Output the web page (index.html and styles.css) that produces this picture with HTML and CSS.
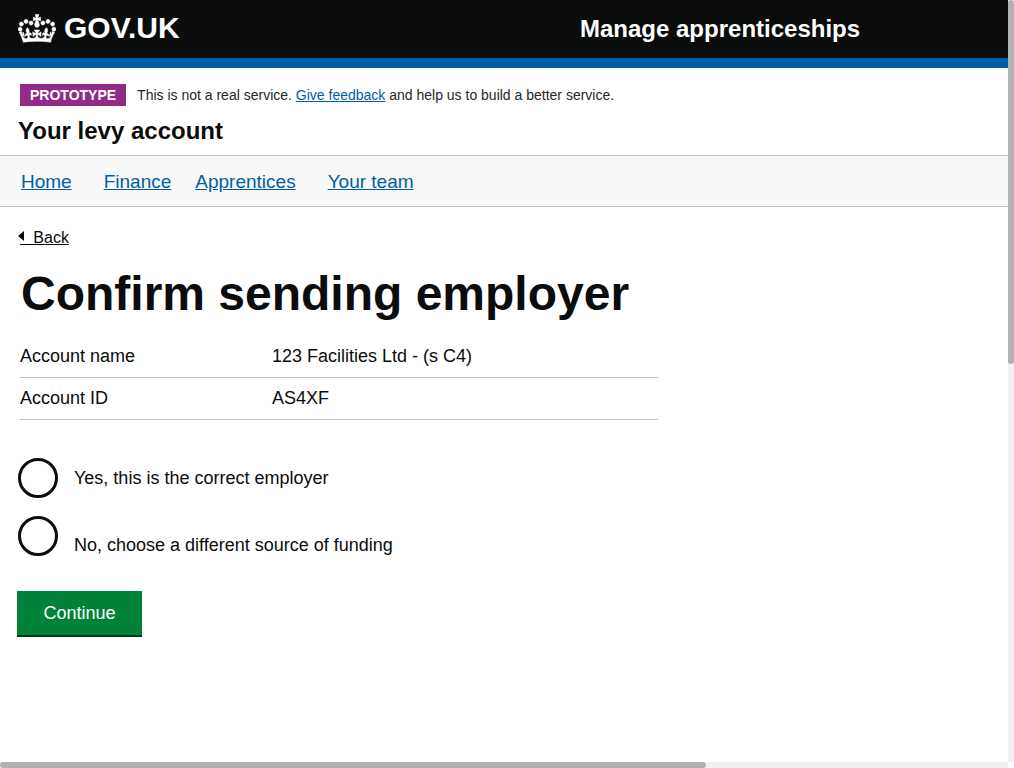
FILE: index.html
```html
<!DOCTYPE html>
<html lang="en">
<head>
<meta charset="utf-8">
<meta name="viewport" content="width=device-width, initial-scale=1">
<title>Confirm sending employer</title>
<link rel="stylesheet" href="styles.css">
</head>
<body>
<div class="frame">
  <div class="page">
    <header class="header">
      <a class="logo" href="#">
        <svg class="crown" viewBox="0 0 132 97" aria-hidden="true"><path fill="currentColor" stroke="currentColor" stroke-width="2" d="M25 30.2c3.5 1.5 7.7-.2 9.1-3.7 1.5-3.6-.2-7.8-3.9-9.2-3.6-1.4-7.6.3-9.1 3.9-1.4 3.5.3 7.5 3.9 9zM9 39.5c3.6 1.5 7.8-.2 9.2-3.7 1.5-3.6-.2-7.8-3.9-9.1-3.6-1.5-7.6.2-9.1 3.8-1.4 3.5.3 7.5 3.8 9zM4.4 57.2c3.5 1.5 7.7-.2 9.1-3.8 1.5-3.6-.2-7.7-3.9-9.1-3.5-1.5-7.6.3-9.1 3.8-1.4 3.5.3 7.6 3.9 9.1zm38.3-21.4c3.5 1.5 7.7-.2 9.1-3.8 1.5-3.6-.2-7.7-3.9-9.1-3.6-1.5-7.6.3-9.1 3.8-1.3 3.6.4 7.7 3.9 9.1zm64.4-5.6c-3.6 1.5-7.8-.2-9.1-3.7-1.5-3.6.2-7.8 3.8-9.2 3.6-1.4 7.7.3 9.2 3.9 1.3 3.5-.4 7.5-3.9 9zm15.9 9.3c-3.6 1.5-7.7-.2-9.1-3.7-1.5-3.6.2-7.8 3.7-9.1 3.6-1.5 7.7.2 9.2 3.8 1.5 3.5-.3 7.5-3.8 9zm4.7 17.7c-3.6 1.5-7.8-.2-9.2-3.8-1.5-3.6.2-7.7 3.9-9.1 3.6-1.5 7.7.3 9.2 3.8 1.3 3.5-.4 7.6-3.9 9.1zM89.3 35.8c-3.6 1.5-7.8-.2-9.2-3.8-1.4-3.6.2-7.7 3.9-9.1 3.6-1.5 7.7.3 9.2 3.8 1.4 3.6-.3 7.7-3.9 9.1zM69.7 17.7l8.9 4.7V9.3l-8.9 2.8c-.2-.3-.5-.6-.9-.9L72.4 0H59.6l3.5 11.2c-.3.3-.6.5-.9.9l-8.8-2.8v13.1l8.8-4.7c.3.3.6.7.9.9l-5 15.4v.1c-.2.8-.4 1.6-.4 2.4 0 4.1 3.1 7.5 7 8.1h.2c.3 0 .7.1 1 .1.4 0 .7 0 1-.1h.2c4-.6 7.1-4.1 7.1-8.1 0-.8-.1-1.7-.4-2.4V34l-5.1-15.4c.4-.2.7-.6 1-.9zM66 92.8c16.9 0 32.8 1.1 47.1 3.2 4-16.9 8.9-26.7 14-33.5l-9.6-3.4c1 4.9 1.1 7.2 0 10.2-1.5-1.4-3-4.3-4.2-8.7L108.6 76c2.8-2 5-3.2 7.5-3.3-4.4 9.4-10 11.9-13.6 11.2-4.3-.8-6.3-4.6-5.6-7.9 1-4.7 5.7-5.9 8-.5 4.3-8.7-3-11.4-7.6-8.8 7.1-7.2 7.9-13.5 2.1-21.1-8 6.1-8.1 12.3-4.5 20.8-4.7-5.4-12.1-2.5-9.5 6.2 3.4-5.2 7.9-2 7.2 3.1-.6 4.3-6.4 7.8-13.5 7.2-10.3-.9-10.9-8-11.2-13.8 2.5-.5 7.1 1.8 11 7.3L80.2 60c-4.1 4.4-8 5.3-12.3 5.4 1.4-4.4 8-11.6 8-11.6H55.5s6.4 7.2 7.9 11.6c-4.2-.1-8-1-12.3-5.4l1.4 16.4c3.9-5.5 8.5-7.7 10.9-7.3-.3 5.8-.9 12.8-11.1 13.8-7.2.6-12.9-2.9-13.5-7.2-.7-5 3.8-8.3 7.1-3.1 2.7-8.7-4.6-11.6-9.4-6.2 3.7-8.5 3.6-14.7-4.6-20.8-5.8 7.6-5 13.9 2.2 21.1-4.7-2.6-11.9.1-7.7 8.8 2.3-5.5 7.1-4.2 8.1.5.7 3.3-1.3 7.1-5.7 7.9-3.5.7-9-1.8-13.5-11.2 2.5.1 4.7 1.3 7.5 3.3l-4.7-15.4c-1.2 4.4-2.7 7.2-4.3 8.7-1.1-3-.9-5.3 0-10.2l-9.5 3.4c5 6.9 9.9 16.7 14 33.5 14.8-2.1 30.8-3.2 47.7-3.2z"/></svg>
        <span>GOV.UK</span>
      </a>
      <span class="service">Manage apprenticeships</span>
    </header>

    <div class="intro">
      <div class="phase">
        <strong class="tag">PROTOTYPE</strong>
        <p class="phase-text">This is not a real service. <a class="link" href="#">Give feedback</a> and help us to build a better service.</p>
      </div>
      <p class="account">Your levy account</p>
    </div>

    <nav class="nav" aria-label="Account">
      <a class="link" href="#">Home</a>
      <a class="link" href="#">Finance</a>
      <a class="link nav-near" href="#">Apprentices</a>
      <a class="link" href="#">Your team</a>
    </nav>

    <main class="main">
      <a class="back" href="#"><svg class="arrow" viewBox="0 0 6 10" aria-hidden="true"><path fill="currentColor" d="M6 0v10L0 5z"/></svg><span class="back-text">&nbsp;&nbsp;&nbsp;Back</span></a>
      <h1 class="title">Confirm sending employer</h1>
      <table class="details">
        <tbody>
          <tr><th scope="row">Account name</th><td>123 Facilities Ltd - (s C4)</td></tr>
          <tr><th scope="row">Account ID</th><td>AS4XF</td></tr>
        </tbody>
      </table>
      <form class="form">
        <div class="choice">
          <input class="radio" type="radio" name="confirm" id="confirm-yes">
          <label for="confirm-yes">Yes, this is the correct employer</label>
        </div>
        <div class="choice choice-low">
          <input class="radio" type="radio" name="confirm" id="confirm-no">
          <label for="confirm-no">No, choose a different source of funding</label>
        </div>
        <button class="button" type="button">Continue</button>
      </form>
    </main>
  </div>
  <div class="track track-v"><div class="thumb"></div></div>
  <div class="track track-h"><div class="thumb"></div></div>
</div>
</body>
</html>
```

FILE: styles.css
```css
* {
  box-sizing: border-box;
}

body {
  margin: 0;
  background: #fff;
  color: #0b0c0c;
  font: 18px/24px "Liberation Sans", Arial, sans-serif;
}

p,
h1 {
  margin: 0;
}

/* Page area with a slim scrollbar on the right and along the bottom */
.frame {
  display: grid;
  grid-template-columns: minmax(0, 1fr) 6px;
  grid-template-rows: 1fr 6px;
  min-height: 100vh;
}

.track {
  display: flex;
  background: #f1f1f1;
}

.track-v {
  flex-direction: column;
}

.thumb {
  background: #b1b1b1;
  border-radius: 3px;
}

.track-v .thumb {
  height: 364px;
}

.track-h .thumb {
  width: 70%;
}

.header {
  display: grid;
  grid-template-columns: 562fr 428fr;
  align-items: center;
  padding: 0 0 0 18px;
  height: 68px;
  background: #0b0c0c;
  border-bottom: 10px solid #005ea5;
  color: #fff;
  font-weight: bold;
}

.logo {
  display: flex;
  align-items: center;
  gap: 8px;
  padding-bottom: 2px;
  color: inherit;
  font-size: 30px;
  text-decoration: none;
}

.crown {
  width: 38px;
  height: 29px;
}

.service {
  font-size: 24px;
}

.intro {
  padding: 16px 18px 10px;
}

.phase {
  display: flex;
  align-items: center;
  gap: 11px;
  padding-left: 2px;
}

.tag {
  padding: 0 10px;
  background: #912b88;
  color: #fff;
  font-size: 14px;
  line-height: 22px;
}

.phase-text {
  color: #262828;
  font-size: 14px;
  line-height: 22px;
}

.account {
  margin-top: 11px;
  font-size: 24px;
  line-height: 28px;
  font-weight: bold;
}

.link {
  color: #005ea5;
}

.nav {
  display: flex;
  align-items: center;
  gap: 32px;
  height: 52px;
  padding: 2px 21px 0;
  background: #f8f8f8;
  border: solid #bfc1c3;
  border-width: 1px 0;
  font-size: 19px;
}

.nav-near {
  margin-left: -8px;
}

.main {
  padding: 16px 17px 40px;
}

.back {
  display: inline-flex;
  align-items: center;
  color: inherit;
  font-size: 16px;
  text-decoration: none;
}

.arrow {
  width: 6px;
  height: 10px;
  margin: 0 -4px 4px 1px;
}

.back-text {
  text-decoration: underline;
}

.title {
  margin: 16px 0 0 4px;
  font-size: 48px;
  line-height: 56px;
}

.details {
  width: 638px;
  max-width: 100%;
  margin: 14px 0 0 3px;
  border-collapse: collapse;
}

.details th,
.details td {
  padding: 8px 0 9px;
  border-bottom: 1px solid #bfc1c3;
  font-weight: normal;
  text-align: left;
}

.details th {
  width: 252px;
}

.form {
  display: flex;
  flex-direction: column;
  align-items: flex-start;
  gap: 17px;
  margin-top: 38px;
}

.choice {
  display: flex;
  align-items: center;
  gap: 16px;
  padding-left: 1px;
}

.choice-low label {
  padding-top: 18px;
}

.radio {
  appearance: none;
  width: 40px;
  height: 40px;
  margin: 0;
  border: 3px solid #0b0c0c;
  border-radius: 50%;
}

.radio:checked {
  background: radial-gradient(#0b0c0c 10px, transparent 11px);
}

.button {
  min-width: 125px;
  margin-top: 17px;
  padding: 10px 26px 12px;
  border: 0;
  background: #00823b;
  box-shadow: inset 0 -2px #003618;
  color: #fff;
  font: inherit;
}
```
